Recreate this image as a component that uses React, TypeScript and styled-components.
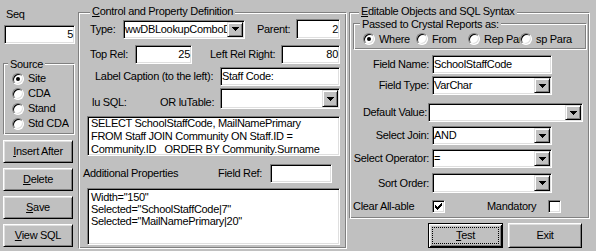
import React from 'react';
import styled, { createGlobalStyle, css } from 'styled-components';

const GlobalStyle = createGlobalStyle`
  html, body { margin: 0; padding: 0; background: #c0c0c0; }
  body {
    font-family: "Liberation Sans", Arial, sans-serif;
    font-size: 11px;
    line-height: 13px;
    letter-spacing: -0.3px;
    color: #000;
  }
  *, *::before, *::after { box-sizing: border-box; }
`;

const sunken = css`
  border: 1px solid;
  border-color: #808080 #fff #fff #808080;
  box-shadow: inset 1px 1px #000, inset -1px -1px #dfdfdf;
  background: #fff;
`;

const raised = css`
  border: 1px solid;
  border-color: #fff #000 #000 #fff;
  box-shadow: inset 1px 1px #dfdfdf, inset -1px -1px #808080;
  background: #c0c0c0;
`;

const Form = styled.div`
  width: 596px;
  height: 251px;
  display: flex;
  align-items: flex-start;
  padding-left: 3px;
  overflow: hidden;
`;

const Column = styled.div<{ $w: number; $ml?: number }>`
  width: ${p => p.$w}px;
  margin-left: ${p => p.$ml ?? 0}px;
  display: flex;
  flex-direction: column;
  align-items: flex-start;
  flex: none;
`;

const SeqLabel = styled.span`
  margin: 8px 0 0 3px;
`;

const Row = styled.div<{ $h: number; $mt?: number; $pl?: number; $align?: string }>`
  display: flex;
  flex: none;
  align-items: ${p => p.$align ?? 'center'};
  height: ${p => p.$h}px;
  margin-top: ${p => p.$mt ?? 0}px;
  padding-left: ${p => p.$pl ?? 0}px;
`;

const Caption = styled.span<{ $w?: number; $ml?: number; $right?: boolean; $pr?: number }>`
  display: block;
  flex: none;
  ${p => p.$w !== undefined && css`width: ${p.$w}px;`}
  margin-left: ${p => p.$ml ?? 0}px;
  padding-right: ${p => p.$pr ?? 0}px;
  text-align: ${p => (p.$right ? 'right' : 'left')};
  white-space: nowrap;
`;

const TextField = styled.div<{ $w: number; $h?: number; $ml?: number; $mt?: number; $right?: boolean }>`
  ${sunken}
  flex: none;
  width: ${p => p.$w}px;
  height: ${p => p.$h ?? 19}px;
  margin-left: ${p => p.$ml ?? 0}px;
  margin-top: ${p => p.$mt ?? 0}px;
  padding: 0 1px;
  display: flex;
  align-items: center;
  justify-content: ${p => (p.$right ? 'flex-end' : 'flex-start')};
  white-space: nowrap;
  overflow: hidden;
`;

const ComboFrame = styled.div<{ $w: number; $h?: number; $ml?: number }>`
  ${sunken}
  flex: none;
  width: ${p => p.$w}px;
  height: ${p => p.$h ?? 19}px;
  margin-left: ${p => p.$ml ?? 0}px;
  padding: 1px;
  display: flex;
  align-items: stretch;
`;

const ComboText = styled.span`
  flex: 1;
  min-width: 0;
  display: flex;
  align-items: center;
  overflow: hidden;
  white-space: nowrap;
`;

const DropButton = styled.span`
  ${raised}
  border-color: #dfdfdf #000 #000 #dfdfdf;
  box-shadow: inset 1px 1px #fff, inset -1px -1px #808080;
  flex: none;
  width: 16px;
  display: flex;
  align-items: center;
  justify-content: center;
`;

const Memo = styled.div<{ $w: number; $h: number; $ml?: number; $mt?: number; $lh: number; $pt: number }>`
  ${sunken}
  flex: none;
  width: ${p => p.$w}px;
  height: ${p => p.$h}px;
  margin-left: ${p => p.$ml ?? 0}px;
  margin-top: ${p => p.$mt ?? 0}px;
  padding: ${p => p.$pt}px 2px 0 3px;
  line-height: ${p => p.$lh}px;
  white-space: pre;
  overflow: hidden;
`;

const GroupBox = styled.div<{ $w: number; $h: number; $ml?: number; $mt?: number }>`
  position: relative;
  flex: none;
  width: ${p => p.$w}px;
  height: ${p => p.$h}px;
  margin-left: ${p => p.$ml ?? 0}px;
  margin-top: ${p => p.$mt ?? 0}px;
  border: 1px solid;
  border-color: #808080 #fff #fff #808080;
  box-shadow: inset 1px 1px #fff, inset -1px -1px #808080;
  display: flex;
  flex-direction: column;
`;

const GroupTitle = styled.span<{ $top: number; $left: number }>`
  position: absolute;
  top: ${p => p.$top}px;
  left: ${p => p.$left}px;
  padding: 0 2px;
  background: #c0c0c0;
  white-space: nowrap;
`;

const RadioOption = styled.div<{ $w?: number; $h: number }>`
  display: flex;
  align-items: center;
  gap: 4px;
  flex: none;
  ${p => p.$w !== undefined && css`width: ${p.$w}px;`}
  height: ${p => p.$h}px;
  overflow: hidden;
  white-space: nowrap;
`;

const RadioCircle = styled.span<{ $checked?: boolean }>`
  position: relative;
  flex: none;
  width: 12px;
  height: 12px;
  border-radius: 50%;
  border: 1px solid;
  border-color: #808080 #fff #fff #808080;
  box-shadow: inset 1px 1px #000, inset -1px -1px #dfdfdf;
  background: #fff;
  ${p =>
    p.$checked &&
    css`
      &::after {
        content: '';
        position: absolute;
        left: 3px;
        top: 3px;
        width: 4px;
        height: 4px;
        border-radius: 50%;
        background: #000;
      }
    `}
`;

const CheckBox = styled.span`
  ${sunken}
  flex: none;
  width: 13px;
  height: 13px;
  display: flex;
  align-items: center;
  justify-content: center;
`;

const PushButton = styled.button<{ $w: number; $h: number; $ml?: number; $mt?: number; $default?: boolean }>`
  ${raised}
  position: relative;
  flex: none;
  font: inherit;
  letter-spacing: inherit;
  color: #000;
  padding: 0;
  width: ${p => p.$w}px;
  height: ${p => p.$h}px;
  margin: ${p => p.$mt ?? 0}px 0 0 ${p => p.$ml ?? 0}px;
  ${p =>
    p.$default &&
    css`
      border: 1px solid #000;
      box-shadow: inset 1px 1px #fff, inset -1px -1px #000, inset 2px 2px #dfdfdf, inset -2px -2px #808080;
      &::after {
        content: '';
        position: absolute;
        inset: 3px;
        border: 1px dotted #000;
      }
    `}
`;

const Arrow = () => (
  <svg width="7" height="4" viewBox="0 0 7 4" shapeRendering="crispEdges">
    <path d="M0 0h7v1H0z M1 1h5v1H1z M2 2h3v1H2z M3 3h1v1H3z" fill="#000" />
  </svg>
);

const CheckMark = () => (
  <svg width="7" height="7" viewBox="0 0 7 7" shapeRendering="crispEdges">
    <path
      d="M6 0h1v1H6z M5 1h2v1H5z M0 2h1v1H0z M4 2h3v1H4z M0 3h2v1H0z M3 3h3v1H3z M0 4h5v1H0z M1 5h3v1H1z M2 6h1v1H2z"
      fill="#000"
    />
  </svg>
);

interface ComboProps {
  w: number;
  h?: number;
  ml?: number;
  children?: React.ReactNode;
}

const Combo: React.FC<ComboProps> = ({ w, h, ml, children }) => (
  <ComboFrame $w={w} $h={h} $ml={ml}>
    <ComboText>{children}</ComboText>
    <DropButton>
      <Arrow />
    </DropButton>
  </ComboFrame>
);

const sourceOptions = ['Site', 'CDA', 'Stand', 'Std CDA'];
const passedOptions = [
  { label: 'Where', w: 53 },
  { label: 'From', w: 52 },
  { label: 'Rep Param', w: 52 },
  { label: 'sp Para', w: 60 },
];

const sqlText = 'SELECT SchoolStaffCode, MailNamePrimary\nFROM Staff JOIN Community ON Staff.ID =\nCommunity.ID   ORDER BY Community.Surname';
const propsText = 'Width="150"\nSelected="SchoolStaffCode|7"\nSelected="MailNamePrimary|20"';

export default function App() {
  return (
    <>
      <GlobalStyle />
      <Form>
        <Column $w={72}>
          <SeqLabel>Seq</SeqLabel>
          <TextField $w={71} $ml={1} $mt={4} $right>
            5
          </TextField>
          <GroupBox $w={72} $h={72} $mt={19}>
            <GroupTitle $top={-6} $left={4}>Source</GroupTitle>
            <Row $h={60} $mt={7} $pl={8} $align="flex-start">
              <div>
                {sourceOptions.map((s, i) => (
                  <RadioOption key={s} $h={15}>
                    <RadioCircle $checked={i === 0} />
                    {s}
                  </RadioOption>
                ))}
              </div>
            </Row>
          </GroupBox>
          <PushButton $w={70} $h={23} $mt={5}>
            <u>I</u>nsert After
          </PushButton>
          <PushButton $w={70} $h={23} $mt={5}>
            <u>D</u>elete
          </PushButton>
          <PushButton $w={70} $h={23} $mt={5}>
            <u>S</u>ave
          </PushButton>
          <PushButton $w={70} $h={23} $mt={5}>
            <u>V</u>iew SQL
          </PushButton>
        </Column>

        <Column $w={269} $ml={3}>
          <GroupBox $w={269} $h={237} $mt={12}>
            <GroupTitle $top={-8} $left={11}>
              <u>C</u>ontrol and Property Definition
            </GroupTitle>
            <Row $h={22} $mt={5} $pl={11}>
              <Caption $w={33}>Type:</Caption>
              <Combo w={122}>wwDBLookupComboDlg</Combo>
              <Caption $w={39} $ml={12}>Parent:</Caption>
              <TextField $w={44} $h={20} $right>
                2
              </TextField>
            </Row>
            <Row $h={19} $mt={5} $pl={11}>
              <Caption $w={45}>Top Rel:</Caption>
              <TextField $w={57} $right>
                25
              </TextField>
              <Caption $w={71} $ml={18}>Left Rel Right:</Caption>
              <TextField $w={59} $right>
                80
              </TextField>
            </Row>
            <Row $h={19} $mt={3} $pl={11}>
              <Caption $w={125} $ml={5}>Label Caption (to the left):</Caption>
              <TextField $w={120}>Staff Code:</TextField>
            </Row>
            <Row $h={21} $mt={2} $pl={11} $align="flex-end">
              <Caption $w={68} $ml={2}>lu SQL:</Caption>
              <Caption $w={60}>OR luTable:</Caption>
              <Combo w={120} h={21} />
            </Row>
            <Memo $w={253} $h={40} $ml={8} $mt={7} $lh={13} $pt={0}>
              {sqlText}
            </Memo>
            <Row $h={19} $mt={8} $pl={4}>
              <Caption $w={135}>Additional Properties</Caption>
              <Caption $w={52}>Field Ref:</Caption>
              <TextField $w={62} />
            </Row>
            <Memo $w={253} $h={57} $ml={8} $mt={5} $lh={12} $pt={2}>
              {propsText}
            </Memo>
          </GroupBox>
        </Column>

        <Column $w={241} $ml={2}>
          <GroupBox $w={241} $h={207} $mt={12}>
            <GroupTitle $top={-8} $left={9}>
              <u>E</u>ditable Objects and SQL Syntax
            </GroupTitle>
            <GroupBox $w={234} $h={27} $mt={10} $ml={3}>
              <GroupTitle $top={-6} $left={6}>Passed to Crystal Reports as:</GroupTitle>
              <Row $h={14} $mt={8} $pl={9}>
                {passedOptions.map((o, i) => (
                  <RadioOption key={o.label} $w={o.w} $h={14}>
                    <RadioCircle $checked={i === 0} />
                    {o.label}
                  </RadioOption>
                ))}
              </Row>
            </GroupBox>
            <Row $h={19} $mt={5}>
              <Caption $w={82} $pr={3} $right>
                Field Name:
              </Caption>
              <TextField $w={120}>SchoolStaffCode</TextField>
            </Row>
            <Row $h={19} $mt={2}>
              <Caption $w={82} $pr={3} $right>
                Field Type:
              </Caption>
              <Combo w={120}>VarChar</Combo>
            </Row>
            <Row $h={19} $mt={8}>
              <Caption $w={78} $pr={1} $right>
                Default Value:
              </Caption>
              <Combo w={155} />
            </Row>
            <Row $h={19} $mt={4}>
              <Caption $w={82} $pr={3} $right>
                Select Join:
              </Caption>
              <Combo w={120}>AND</Combo>
            </Row>
            <Row $h={19} $mt={4}>
              <Caption $w={82} $pr={3} $right>
                Select Operator:
              </Caption>
              <Combo w={120}>=</Combo>
            </Row>
            <Row $h={20} $mt={5}>
              <Caption $w={82} $pr={3} $right>
                Sort Order:
              </Caption>
              <Combo w={120} h={20} />
            </Row>
            <Row $h={13} $mt={7} $pl={3}>
              <Caption $w={79}>Clear All-able</Caption>
              <CheckBox>
                <CheckMark />
              </CheckBox>
              <Caption $w={61} $ml={42}>Mandatory</Caption>
              <CheckBox />
            </Row>
          </GroupBox>
          <Row $h={25} $mt={4} $pl={79}>
            <PushButton $w={75} $h={25} $default>
              <u>T</u>est
            </PushButton>
            <PushButton $w={74} $h={25} $ml={5}>
              Exit
            </PushButton>
          </Row>
        </Column>
      </Form>
    </>
  );
}
